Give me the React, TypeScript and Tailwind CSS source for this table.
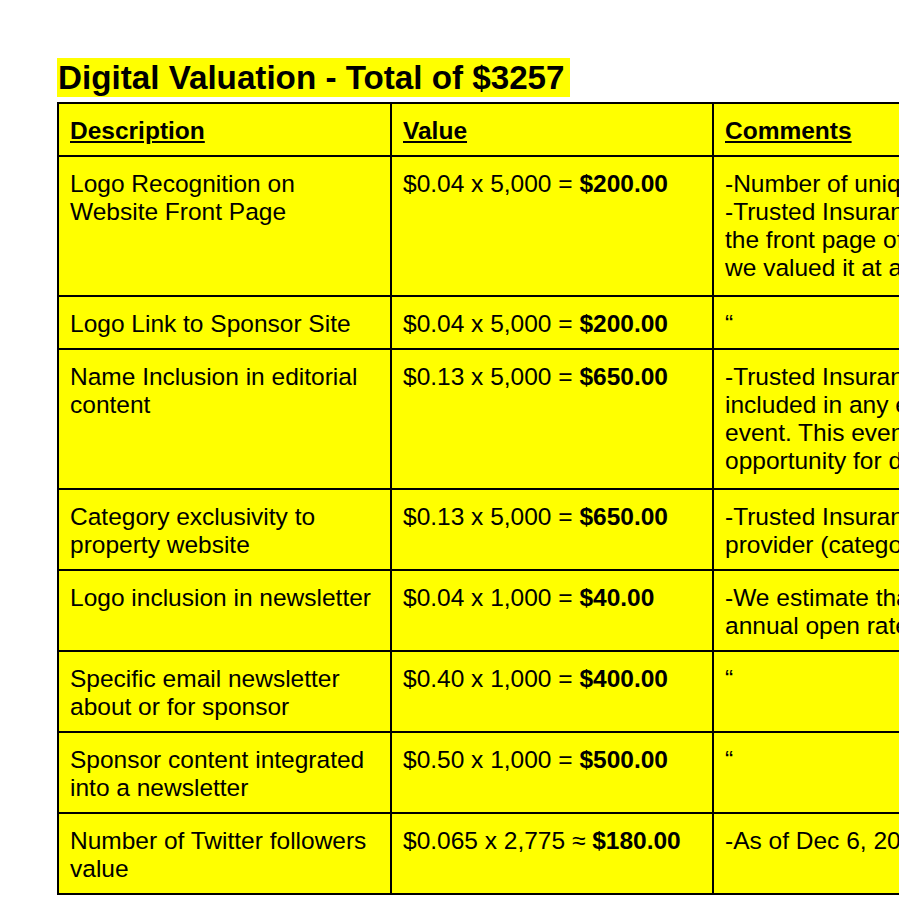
import React from 'react';

type Row = {
  desc: string;
  rate: string;
  total: string;
  comments: string[];
  tall?: boolean;
};

const ROWS: Row[] = [
  {
    desc: 'Logo Recognition on Website Front Page',
    rate: '$0.04 x 5,000 = ',
    total: '$200.00',
    comments: [
      '-Number of unique visitors to the site: 5,000',
      '-Trusted Insurance Advisor’s logo is on',
      'the front page of the website, therefore',
      'we valued it at a premium impression rate',
    ],
    tall: true,
  },
  {
    desc: 'Logo Link to Sponsor Site',
    rate: '$0.04 x 5,000 = ',
    total: '$200.00',
    comments: ['“'],
  },
  {
    desc: 'Name Inclusion in editorial content',
    rate: '$0.13 x 5,000 = ',
    total: '$650.00',
    comments: [
      '-Trusted Insurance Advisor’s name will be',
      'included in any editorial content about the',
      'event. This event is a high-visibility',
      'opportunity for direct exposure to buyers',
    ],
    tall: true,
  },
  {
    desc: 'Category exclusivity to property website',
    rate: '$0.13 x 5,000 = ',
    total: '$650.00',
    comments: [
      '-Trusted Insurance Advisor is the only insurance',
      'provider (category exclusive) on the website',
    ],
  },
  {
    desc: 'Logo inclusion in newsletter',
    rate: '$0.04 x 1,000 = ',
    total: '$40.00',
    comments: [
      '-We estimate that 1,000 people open it, based on',
      'annual open rates of our subscriber list',
    ],
  },
  {
    desc: 'Specific email newsletter about or for sponsor',
    rate: '$0.40 x 1,000 = ',
    total: '$400.00',
    comments: ['“'],
  },
  {
    desc: 'Sponsor content integrated into a newsletter',
    rate: '$0.50 x 1,000 = ',
    total: '$500.00',
    comments: ['“'],
  },
  {
    desc: 'Number of Twitter followers value',
    rate: '$0.065 x 2,775 ≈ ',
    total: '$180.00',
    comments: ['-As of Dec 6, 2019 we have 2,775 followers'],
  },
];

export default function App() {
  return (
    <div className="w-[899px] h-[899px] overflow-hidden bg-white text-black font-['Liberation_Sans',Arial,sans-serif]">
      <div className="pt-[58px] pl-[57px]">
        <div className="h-[39px]">
          <span className="inline-block h-[39px] leading-[39px] pl-[1px] pr-[5px] bg-[#ffff00] text-[33.2px] font-bold">
            Digital Valuation - Total of $3257
          </span>
        </div>

        <table className="mt-[5px] table-fixed border-collapse border-2 border-black bg-[#ffff00] text-[24.5px] leading-[28px] w-[1060px]">
          <thead>
            <tr>
              <th className="w-[333px] border-2 border-black px-[11px] pt-[13px] pb-[10px] text-left align-top font-bold underline">
                Description
              </th>
              <th className="w-[322px] border-2 border-black px-[11px] pt-[13px] pb-[10px] text-left align-top font-bold underline">
                Value
              </th>
              <th className="border-2 border-black px-[11px] pt-[13px] pb-[10px] text-left align-top font-bold underline">
                Comments
              </th>
            </tr>
          </thead>
          <tbody>
            {ROWS.map((r, i) => (
              <tr key={i} className={r.tall ? 'h-[140px]' : ''}>
                <td className="border-2 border-black px-[11px] pt-[13px] pb-[10px] align-top">{r.desc}</td>
                <td className="border-2 border-black px-[11px] pt-[13px] pb-[10px] align-top whitespace-nowrap">
                  {r.rate}
                  <b>{r.total}</b>
                </td>
                <td className="border-2 border-black px-[11px] pt-[13px] pb-[10px] align-top whitespace-nowrap">
                  {r.comments.map((c, j) => (
                    <div key={j}>{c}</div>
                  ))}
                </td>
              </tr>
            ))}
          </tbody>
        </table>
      </div>
    </div>
  );
}
